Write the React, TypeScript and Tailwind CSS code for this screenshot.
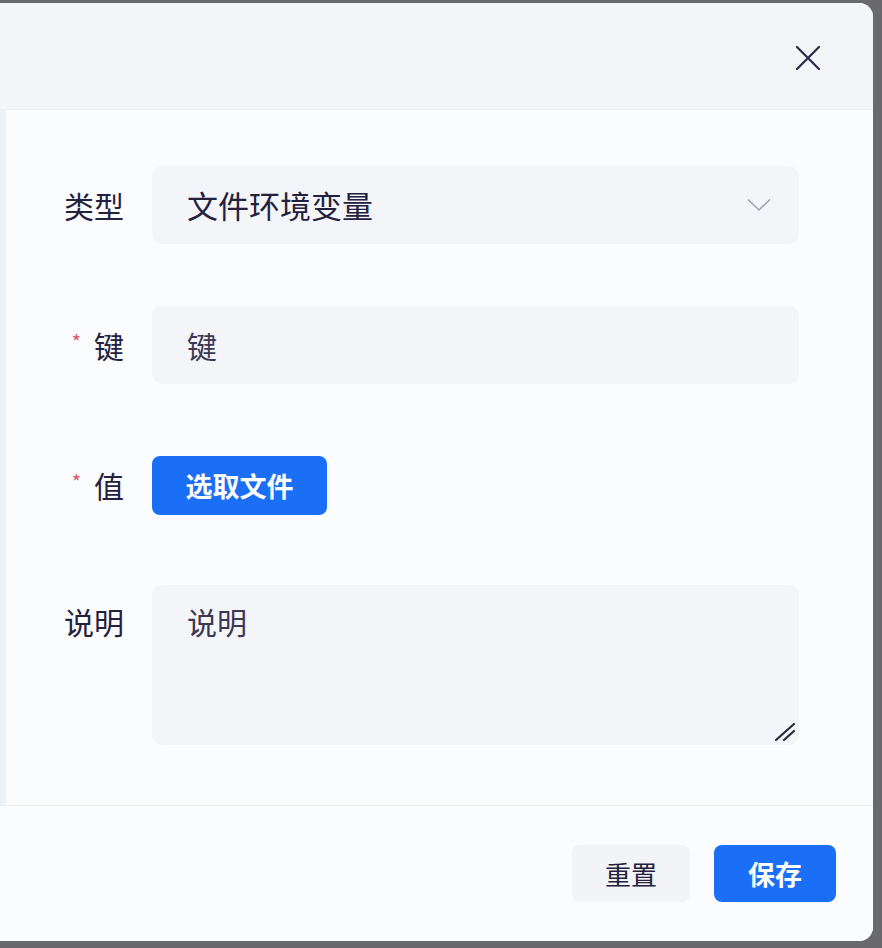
import React from "react";

const font = { fontFamily: '"Noto Sans CJK SC", "Noto Sans", sans-serif' };

function Label({ text, required }: { text: string; required?: boolean }) {
  return (
    <div className="w-[124px] h-[78px] flex items-center justify-end shrink-0">
      {required && (
        <span className="text-[#e0566b] text-[20px] leading-none mr-[13px] -mt-[6px]">*</span>
      )}
      <span className="text-[30px] leading-[40px] text-[#23213d]">{text}</span>
    </div>
  );
}

export default function App() {
  return (
    <div className="w-[882px] h-[948px] bg-[#6a6a6c] pt-[3px] pr-[9px] pb-[7px] overflow-hidden" style={font}>
      <div className="w-[873px] h-[938px] rounded-r-[14px] overflow-hidden flex flex-col bg-[#fafcfd]">
        {/* Header */}
        <div className="h-[107px] bg-[#f3f5f9] flex items-center justify-end pr-[52px] border-b border-[#eef0f4] shrink-0">
          <svg width="26" height="26" viewBox="0 0 26 26" className="mt-[3px]">
            <path d="M2 2 L24 24 M24 2 L2 24" stroke="#2b2a48" strokeWidth="2.2" strokeLinecap="round" />
          </svg>
        </div>
        {/* Body */}
        <div className="h-[695px] flex bg-[#fbfcfe] shrink-0">
          <div className="w-[6px] bg-[#edf2fb]" />
          <div className="flex-1 flex flex-col pt-[56px] gap-[62px] -ml-[6px]">
            {/* 类型 */}
            <div className="flex items-start gap-[28px]">
              <Label text="类型" />
              <div className="w-[647px] h-[78px] rounded-[10px] bg-[#f3f5f8] flex items-center justify-between pl-[35px] pr-[28px]">
                <span className="text-[31px] leading-[40px] text-[#23213d]">文件环境变量</span>
                <svg width="24" height="14" viewBox="0 0 24 14">
                  <path d="M1 1.5 L12 12 L23 1.5" fill="none" stroke="#a3a3ae" strokeWidth="1.6" />
                </svg>
              </div>
            </div>
            {/* 键 */}
            <div className="flex items-start gap-[28px]">
              <Label text="键" required />
              <div className="w-[647px] h-[78px] rounded-[10px] bg-[#f3f5f8] flex items-center pl-[35px]">
                <span className="text-[30px] leading-[40px] text-[#3a3853]">键</span>
              </div>
            </div>
            {/* 值 */}
            <div className="flex items-start gap-[28px]">
              <Label text="值" required />
              <div className="h-[78px] flex items-center">
                <button className="w-[175px] h-[59px] rounded-[8px] bg-[#1b6ef6] text-white text-[27px] font-bold leading-none flex items-center justify-center">
                  选取文件
                </button>
              </div>
            </div>
            {/* 说明 */}
            <div className="flex items-start gap-[28px] -mt-[1px]">
              <div className="-mt-[3px]">
                <Label text="说明" />
              </div>
              <div className="relative w-[647px] h-[160px] rounded-[10px] bg-[#f3f5f8] pl-[35px] pt-[16px]">
                <span className="text-[30px] leading-[40px] text-[#3a3853]">说明</span>
                <svg width="22" height="22" viewBox="0 0 22 22" className="absolute right-[3px] bottom-[3px]">
                  <path d="M2 20 L20 4 M10 20 L20 11" stroke="#2a2a38" strokeWidth="2.2" strokeLinecap="round" />
                </svg>
              </div>
            </div>
          </div>
        </div>
        {/* Footer */}
        <div className="flex-1 border-t border-[#eceff3] bg-[#fafcfd] flex items-center justify-end pr-[37px] gap-[24px]">
          <button className="w-[118px] h-[57px] rounded-[8px] bg-[#f2f4f8] text-[26px] leading-none text-[#23213d]">
            重置
          </button>
          <button className="w-[122px] h-[57px] rounded-[8px] bg-[#1b6ef6] text-[27px] font-bold leading-none text-white">
            保存
          </button>
        </div>
      </div>
    </div>
  );
}
